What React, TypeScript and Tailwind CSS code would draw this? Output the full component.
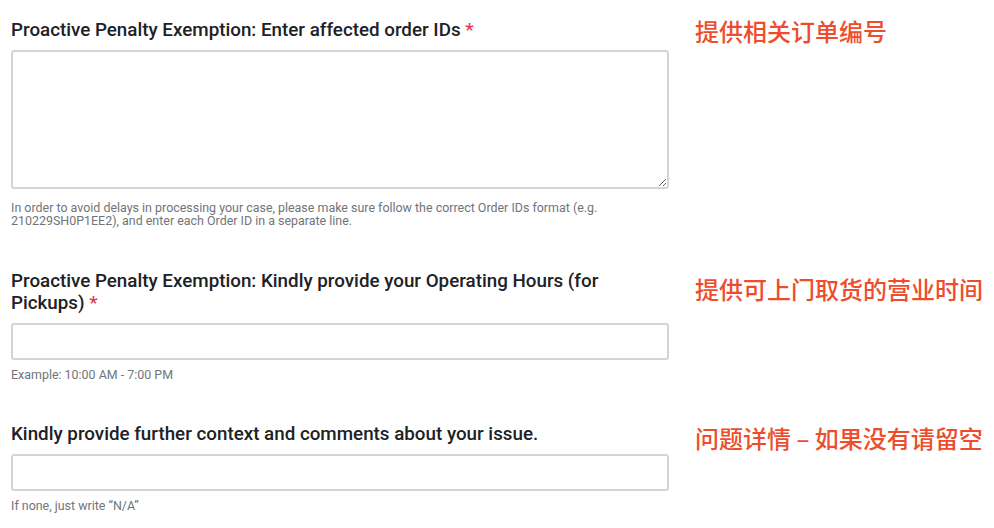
import React from 'react';

const fields = [
  {
    label: 'Proactive Penalty Exemption: Enter affected order IDs',
    required: true,
    multiline: true,
    help: 'In order to avoid delays in processing your case, please make sure follow the correct Order IDs format (e.g. 210229SH0P1EE2), and enter each Order ID in a separate line.',
    note: '提供相关订单编号',
    noteClass: 'mt-[-4px]',
    rowClass: 'pt-[19px]',
  },
  {
    label: 'Proactive Penalty Exemption: Kindly provide your Operating Hours (for Pickups)',
    required: true,
    multiline: false,
    help: 'Example: 10:00 AM - 7:00 PM',
    note: '提供可上门取货的营业时间',
    noteClass: 'mt-[3px]',
    rowClass: 'pt-[43px]',
  },
  {
    label: 'Kindly provide further context and comments about your issue.',
    required: false,
    multiline: false,
    help: 'If none, just write “N/A”',
    note: '问题详情 – 如果没有请留空',
    noteClass: 'mt-[-1px]',
    rowClass: 'pt-[42px]',
  },
];

export default function App() {
  return (
    <div className="min-h-screen w-[994px] bg-white font-['Roboto','Liberation_Sans',sans-serif]">
      <div className="pl-[11px]">
        {fields.map((f) => (
          <div key={f.label} className={`flex ${f.rowClass}`}>
            <div className="w-[658px] shrink-0">
              <p className="text-[18.8px] leading-[22px] font-medium text-[#202124]">
                {f.label}
                {f.required && <span className="text-[#e2365a]">{'\u00a0'}*</span>}
              </p>
              {f.multiline ? (
                <textarea className="mt-[9px] block h-[139px] w-full rounded-[3px] border-2 border-[#d4d4d4] bg-white" />
              ) : (
                <input className="mt-[9px] block h-[37px] w-full rounded-[3px] border-2 border-[#d4d4d4] bg-white" />
              )}
              <p className={`${f.multiline ? 'mt-[12px]' : 'mt-[8px]'} text-[12.45px] leading-[13px] text-[#70757a]`}>
                {f.help}
              </p>
            </div>
            <div className={`ml-[26px] ${f.noteClass}`}>
              <p className="text-[24px] leading-[32px] font-medium text-[#ee4d2d] font-['Noto_Sans_CJK_SC',sans-serif]">
                {f.note}
              </p>
            </div>
          </div>
        ))}
      </div>
    </div>
  );
}
